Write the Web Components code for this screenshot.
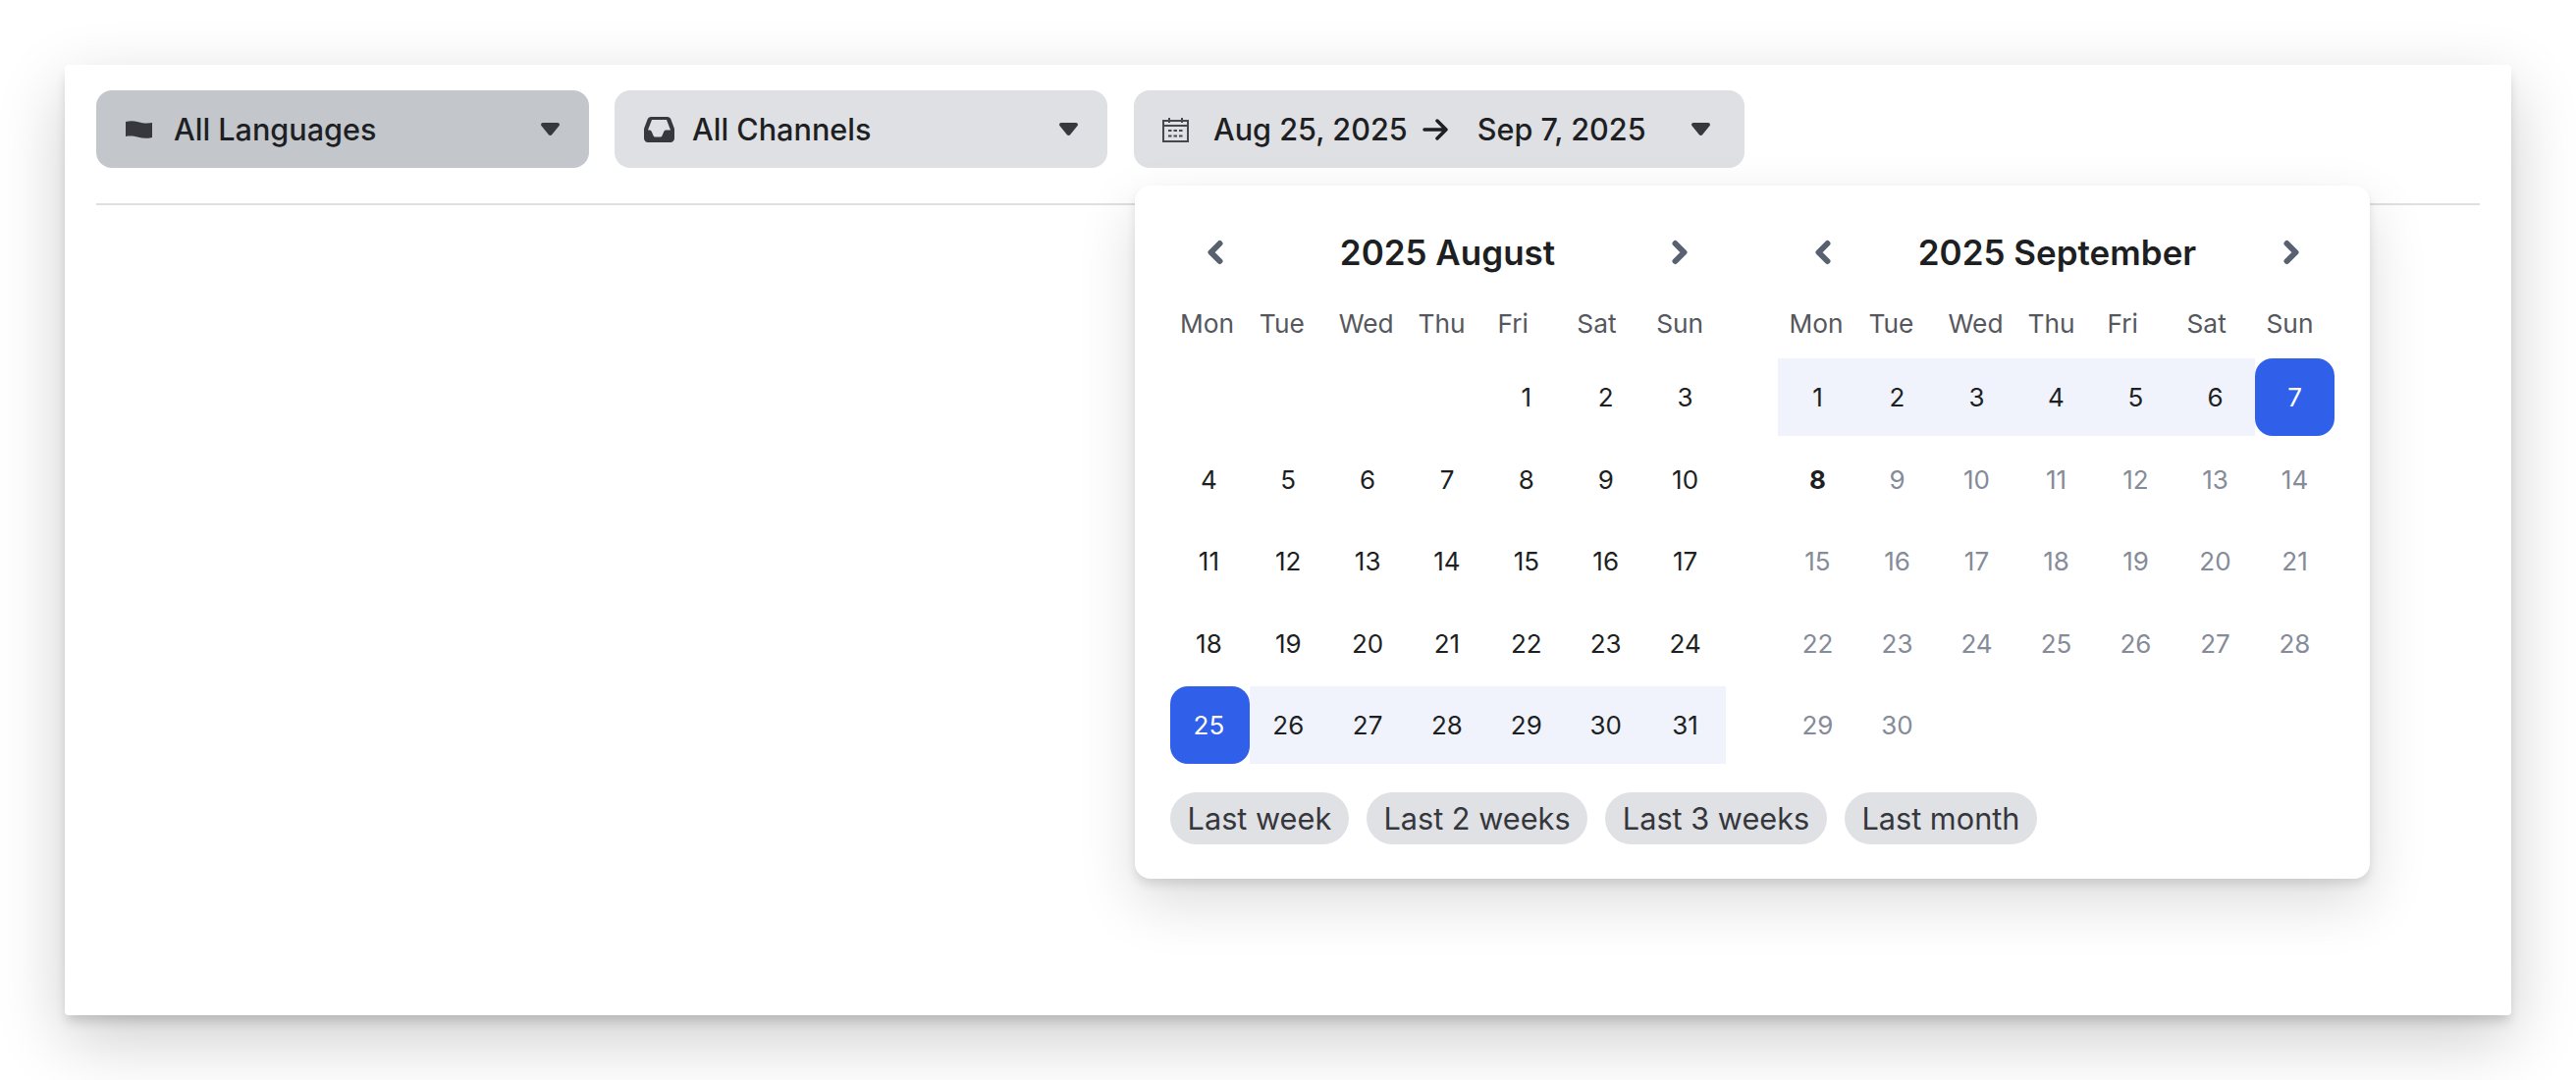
<!DOCTYPE html>
<html>
<head>
<meta charset="utf-8">
<title>Filters</title>
<style>
    html, body { margin: 0; background: #fff; }
    body { font-family: Inter, "Noto Sans", sans-serif; color: #1d1f23; }
    svg { display: block; }
</style>
</head>
<body>
<filter-page>
    <filter-button slot="filters" active>
        <svg slot="icon" width="27" height="18" viewBox="0 0 27 18"><path fill="#37383d" d="M0 1C4-.3 9 0 13 1.200S22 2.800 27 2v15c-5 1.300-10 1-14-.2S4 15 0 16z"/></svg>
        All Languages
    </filter-button>
    <filter-button slot="filters">
        <svg slot="icon" width="31" height="26" viewBox="0 0 31 26"><path fill="#37383d" fill-rule="evenodd" d="M7.300 0h16.400c1.500 0 2.800.8 3.500 2.100l3.400 8.800c.3.600.4 1.200.4 1.900V22c0 2.200-1.800 4-4 4H4c-2.200 0-4-1.800-4-4v-9.200c0-.7.100-1.300.4-1.900l3.400-8.800C4.500.8 5.800 0 7.300 0zM8 3h15l4 10.500h-4.500c-1 0-1.700.6-2.200 1.400l-2 4.700c-.3.600-.8 1-1.500 1h-5.600c-.7 0-1.200-.4-1.500-1l-2-4.700c-.5-.8-1.200-1.400-2.200-1.400H4z"/></svg>
        All Channels
    </filter-button>
    <date-button slot="filters" from="Aug 25, 2025" to="Sep 7, 2025"></date-button>
    <date-popover slot="popover">
        <cal-month title="2025 August" first="4" days="31" start="25" end="31"></cal-month>
        <cal-month title="2025 September" first="0" days="30" start="1" end="7" today="8"></cal-month>
        <quick-chip slot="chips">Last week</quick-chip>
        <quick-chip slot="chips">Last 2 weeks</quick-chip>
        <quick-chip slot="chips">Last 3 weeks</quick-chip>
        <quick-chip slot="chips">Last month</quick-chip>
    </date-popover>
</filter-page>
<script>
const caret = `<svg width="19" height="13" viewBox="0 0 19 13"><path fill="#37383d" d="M2 0h15c1.600 0 2.500 1.700 1.600 3l-7.500 9.200c-.8 1-2.400 1-3.200 0L.4 3C-.5 1.700.4 0 2 0z"/></svg>`
const chevron = (d) => `<svg width="20" height="26" viewBox="0 0 20 26"><path fill="none" stroke="#596170" stroke-width="6" stroke-linecap="round" stroke-linejoin="round" d="${d}"/></svg>`

class FilterPage extends HTMLElement {
    constructor() {
        super()
        this.attachShadow({ mode: 'open' })
        this.shadowRoot.innerHTML = `
            <style>
                :host { display: block; padding: 66px; }
                .card {
                    position: relative;
                    box-sizing: border-box;
                    height: 968px;
                    padding: 26px 32px;
                    background: #fff;
                    border-radius: 4px;
                    box-shadow: 0 8px 12px -2px rgba(0,0,0,.16), 0 24px 70px rgba(0,0,0,.2);
                }
                .bar {
                    display: flex;
                    gap: 26px;
                    padding-bottom: 36px;
                    border-bottom: 2px solid #dedfe3;
                }
                .pop { position: absolute; left: 1090px; top: 123px; }
            </style>
            <div class="card">
                <div class="bar"><slot name="filters"></slot></div>
                <div class="pop"><slot name="popover"></slot></div>
            </div>
        `
    }
}

class FilterButton extends HTMLElement {
    constructor() {
        super()
        this.attachShadow({ mode: 'open' })
        this.shadowRoot.innerHTML = `
            <style>
                :host {
                    display: flex;
                    align-items: center;
                    box-sizing: border-box;
                    width: 502px;
                    height: 79px;
                    padding: 0 30px;
                    border-radius: 16px;
                    background: #dfe0e4;
                    font-size: 30.600px;
                    font-weight: 500;
                    color: #1d1f23;
                }
                :host([active]) { background: #c3c6cb; }
                .icon { width: 49px; flex: none; display: flex; }
                .label { flex: 1; white-space: nowrap; }
            </style>
            <span class="icon"><slot name="icon"></slot></span>
            <span class="label"><slot></slot></span>
            ${caret}
        `
    }
}

class DateButton extends HTMLElement {
    constructor() {
        super()
        this.attachShadow({ mode: 'open' })
    }
    connectedCallback() {
        this.shadowRoot.innerHTML = `
            <style>
                :host {
                    display: flex;
                    align-items: center;
                    box-sizing: border-box;
                    width: 622px;
                    height: 79px;
                    margin-left: 1px;
                    padding: 0 35px 0 29px;
                    border-radius: 16px;
                    background: #dfe0e4;
                    font-size: 30.600px;
                    font-weight: 500;
                    color: #1d1f23;
                    white-space: nowrap;
                }
                .cal { margin-right: 25px; }
                .arrow { margin: 0 30px 0 15px; }
                .to { flex: 1; }
            </style>
            <svg class="cal" width="27" height="26" viewBox="0 0 27 26" fill="none" stroke="#47484d" stroke-width="2">
                <path d="M1 4h25v21H1zM1 9h25M7 1v5M20 1v5"/>
                <path stroke-dasharray="3.500 2" d="M6 14h15M6 19.500h15"/>
            </svg>
            <span>${this.getAttribute('from')}</span>
            <svg class="arrow" width="26" height="22" viewBox="0 0 26 22" fill="none" stroke="#1d1f23" stroke-width="3.500" stroke-linecap="round" stroke-linejoin="round"><path d="M2 11h22M15 2l9 9-9 9"/></svg>
            <span class="to">${this.getAttribute('to')}</span>
            ${caret}
        `
    }
}

class DatePopover extends HTMLElement {
    constructor() {
        super()
        this.attachShadow({ mode: 'open' })
        this.shadowRoot.innerHTML = `
            <style>
                :host {
                    display: block;
                    box-sizing: border-box;
                    width: 1258px;
                    height: 706px;
                    padding: 36px 36px 35px;
                    background: #fff;
                    border-radius: 16px;
                    box-shadow: 0 6px 10px rgba(0,0,0,.1), 0 24px 60px rgba(0,0,0,.14);
                }
                .months { display: flex; gap: 53px; height: 553px; }
                .chips { display: flex; gap: 18px; margin-top: 29px; }
            </style>
            <div class="months"><slot></slot></div>
            <div class="chips"><slot name="chips"></slot></div>
        `
    }
}

class CalMonth extends HTMLElement {
    constructor() {
        super()
        this.attachShadow({ mode: 'open' })
    }
    getCells() {
        const first = +this.getAttribute('first')
        const days = +this.getAttribute('days')
        const start = +this.getAttribute('start')
        const end = +this.getAttribute('end')
        const today = +this.getAttribute('today')
        const edge = this.getAttribute('title').includes('August') ? start : end
        let html = '<span></span>'.repeat(first)
        for (let d = 1; d <= days; d++) {
            let cls = ''
            if (d === edge) cls = 'edge'
            else if (d >= start && d <= end) cls = 'range'
            else if (d === today) cls = 'today'
            else if (today && d > today) cls = 'off'
            html += `<span class="${cls}">${d}</span>`
        }
        return html
    }
    connectedCallback() {
        const names = ['Mon', 'Tue', 'Wed', 'Thu', 'Fri', 'Sat', 'Sun']
        this.shadowRoot.innerHTML = `
            <style>
                :host { display: block; width: 566px; --head-right: 37px; --day-nudge: 2px; --week-left: 10px; }
                :host([today]) { width: 567px; --head-right: 34px; --day-nudge: 0px; --week-left: 11.500px; }
                .head {
                    display: flex;
                    align-items: center;
                    justify-content: space-between;
                    height: 64px;
                    padding: 0 var(--head-right) 0 36px;
                    font-size: 35px;
                    font-weight: 600;
                    color: #1d1f23;
                }
                .week, .days { display: grid; grid-template-columns: repeat(7, 1fr); }
                .week { box-sizing: border-box; height: 76px; align-items: center; font-size: 26.300px; color: #55575d; padding-top: 5px; }
                .week span { padding-left: var(--week-left); }
                .days { grid-auto-rows: 79px; row-gap: 4.500px; font-size: 26px; color: #1d1f23; }
                .days span { display: flex; align-items: center; justify-content: center; padding-right: var(--day-nudge); }
                .range { background: #f0f3fb; }
                .edge { background: #3060ea; color: #fff; border-radius: 18px; }
                .today { font-weight: 700; }
                .off { color: #858b98; }
            </style>
            <div class="head">
                ${chevron('M14.500 4 5.500 13l9 9')}
                <span>${this.getAttribute('title')}</span>
                ${chevron('M5.500 4l9 9-9 9')}
            </div>
            <div class="week">${names.map(n => `<span>${n}</span>`).join('')}</div>
            <div class="days">${this.getCells()}</div>
        `
    }
}

class QuickChip extends HTMLElement {
    constructor() {
        super()
        this.attachShadow({ mode: 'open' })
        this.shadowRoot.innerHTML = `
            <style>
                :host {
                    display: flex;
                    align-items: center;
                    height: 53px;
                    padding: 0 17.600px;
                    border-radius: 27px;
                    background: #e0e1e5;
                    font-size: 30.700px;
                    color: #35373c;
                    white-space: nowrap;
                }
            </style>
            <slot></slot>
        `
    }
}

customElements.define('filter-page', FilterPage)
customElements.define('filter-button', FilterButton)
customElements.define('date-button', DateButton)
customElements.define('date-popover', DatePopover)
customElements.define('cal-month', CalMonth)
customElements.define('quick-chip', QuickChip)
</script>
</body>
</html>
